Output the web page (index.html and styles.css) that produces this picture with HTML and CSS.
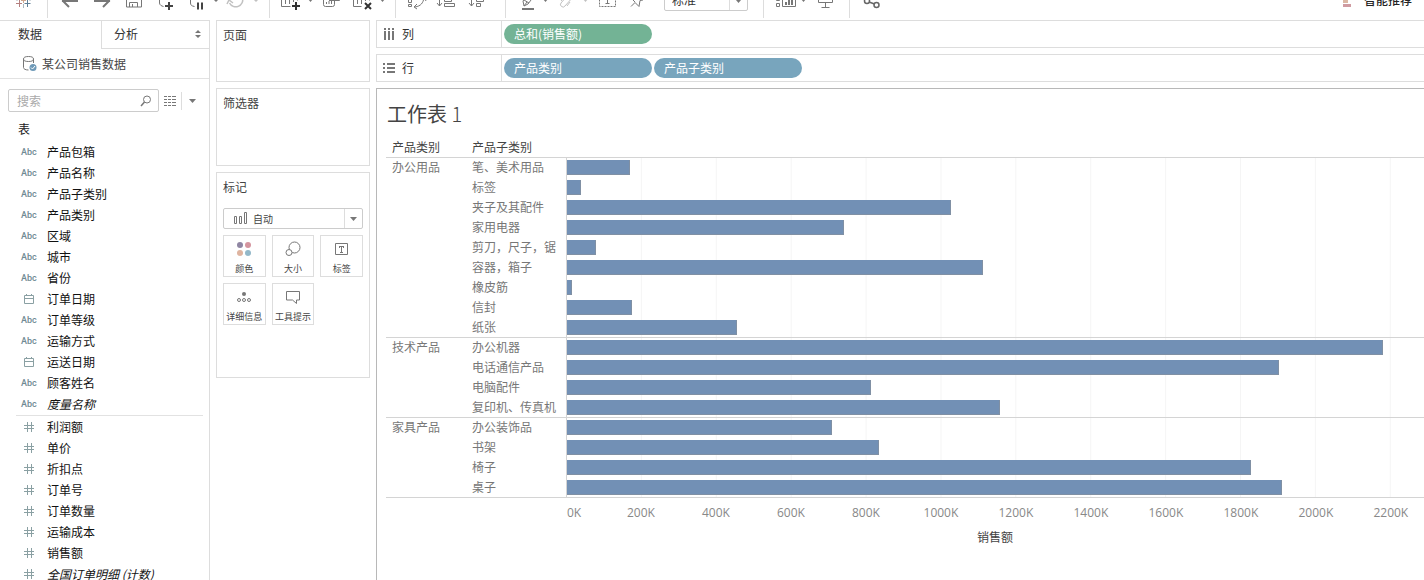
FILE: index.html
```html
<!DOCTYPE html>
<html lang="zh-CN">
<head>
<meta charset="utf-8">
<title>工作表 1</title>
<link rel="stylesheet" href="styles.css">
</head>
<body>
<header class="toolbar">
  <div class="group group-logo">
    <button class="tool tool-logo" aria-label="起始页"><svg width="28" height="24" viewBox="0 0 28 24"><path d="M14.500 8v5M12 10.500h5" stroke="#d0a890"/><path d="M10.500 10v7M7 13.500h6" stroke="#b57f7f"/><path d="M18.500 10v7M15.500 13.500h6" stroke="#5f7f96"/><path d="M14.500 14v4M8 9v2M21 9v2" stroke="#aab6bd"/></svg></button>
  </div>
  <div class="group group-file">
    <button class="tool plain" aria-label="撤消"><svg width="28" height="24" viewBox="0 0 28 24"><path d="M6 11h16M14 4l-7 7 6 6" stroke-width="2"/></svg></button>
    <button class="tool plain" aria-label="恢复"><svg width="28" height="24" viewBox="0 0 28 24"><path d="M6 11h16M14 4l7 7-6 6" stroke-width="2"/></svg></button>
    <button class="tool plain" aria-label="保存"><svg width="28" height="24" viewBox="0 0 28 24"><path d="M6.500 3.500h12l3 3v10.500h-15zM9.500 17v-4.500h8v4.500M12.500 17v-3"/></svg></button>
    <button class="tool plain" aria-label="新建数据源"><svg width="28" height="24" viewBox="0 0 28 24"><path d="M7.500 4v9c0 2 2 3 4 3.500M7.500 5c0-4 11-4 11 0v4"/><path d="M17 12v8M13 16h8" stroke="#444" stroke-width="2"/></svg></button>
    <button class="tool" aria-label="暂停自动更新"><svg width="28" height="24" viewBox="0 0 28 24"><path d="M8.500 4v9c0 2 1 3 4 3.500M8.500 5c0-4 11-4 11 0v4"/><path d="M16 12.500v7M20 12.500v7" stroke="#444" stroke-width="2"/></svg></button>
    <button class="caret" aria-label="更新选项"><svg width="12" height="24" viewBox="0 0 12 24"><path class="fill" d="M3 9h6l-3 3z"/></svg></button>
    <button class="tool faded" aria-label="运行更新"><svg width="28" height="24" viewBox="0 0 28 24"><path d="M20.500 8a7 7 0 0 1-13 5M5 14l2-4 4 3" stroke-width="1.500"/></svg></button>
    <button class="caret faded" aria-label="运行选项"><svg width="12" height="24" viewBox="0 0 12 24"><path class="fill" d="M3 9h6l-3 3z"/></svg></button>
  </div>
  <div class="group group-sheet">
    <button class="tool" aria-label="新建工作表"><svg width="28" height="24" viewBox="0 0 28 24"><path d="M4.500 4v12.500h9M4.500 3.500h16v7M8.500 14v-4M12.500 14v-7M16.500 12v-6" /><path d="M19 12v8M15 16h8" stroke="#333" stroke-width="2"/></svg></button>
    <button class="caret" aria-label="新建选项"><svg width="12" height="24" viewBox="0 0 12 24"><path class="fill" d="M3 9h5l-2.500 3z"/></svg></button>
    <button class="tool plain" aria-label="复制工作表"><svg width="28" height="24" viewBox="0 0 28 24"><path d="M6.500 5.500v9q0 2 2 2h7q2 0 2-2v-4M12 10.500h10.500v-8M9.500 14v-2M12 14v-3M14.500 14v-3"/></svg></button>
    <button class="tool" aria-label="清除工作表"><svg width="28" height="24" viewBox="0 0 28 24"><path d="M4.500 4v12.500h8M4.500 3.500h16v7M8.500 14v-4M12.500 14v-7M16.500 11v-5"/><path d="M16 13l6 6M22 13l-6 6" stroke="#333" stroke-width="2"/></svg></button>
    <button class="caret" aria-label="清除选项"><svg width="12" height="24" viewBox="0 0 12 24"><path class="fill" d="M3 9h5l-2.500 3z"/></svg></button>
  </div>
  <div class="group group-sort">
    <button class="tool" aria-label="交换行和列"><svg width="28" height="24" viewBox="0 0 28 24"><path d="M5.500 4.500h3v3h-3zM5.500 9.500h3v3h-3zM5.500 14.500h3v2h-3zM12 17c6-1 8-4 9-9M18 10l3-3 2 4M14 14l-3 3 3 2"/></svg></button>
    <button class="tool plain" aria-label="升序排序"><svg width="28" height="24" viewBox="0 0 28 24"><path d="M8.500 2v14M6 13l2.500 3 2.500-3M13.500 3.500h5v3h-5zM13.500 8.500h7v3h-7zM13.500 13.500h10v3h-10z"/></svg></button>
    <button class="tool plain" aria-label="降序排序"><svg width="28" height="24" viewBox="0 0 28 24"><path d="M8.500 2v14M6 13l2.500 3 2.500-3M13.500 3.500h10v3h-10zM13.500 8.500h7v3h-7zM13.500 13.500h4v3h-4z"/></svg></button>
  </div>
  <div class="group group-format">
    <button class="tool" aria-label="突出显示"><svg width="28" height="24" viewBox="0 0 28 24"><path d="M11 16l-1-5 6-8 5 3-6 8zM11 10l5 3M11 16l3-4"/><path d="M9 19h12" stroke-width="2"/></svg></button>
    <button class="caret" aria-label="突出显示选项"><svg width="12" height="24" viewBox="0 0 12 24"><path class="fill" d="M2 9h5l-2.500 3z"/></svg></button>
    <button class="tool faded" aria-label="组成员"><svg width="28" height="24" viewBox="0 0 28 24"><path d="M8 11l7-8a3 3 0 0 1 5 4l-8 9a2.500 2.500 0 0 1-4-3l7-8M17 12l-3 4"/></svg></button>
    <button class="caret faded" aria-label="组选项"><svg width="12" height="24" viewBox="0 0 12 24"><path class="fill" d="M2 9h5l-2.500 3z"/></svg></button>
    <button class="tool" aria-label="显示标记标签"><svg width="28" height="24" viewBox="0 0 28 24"><path d="M6.500 2.500h16v14h-16z" stroke-dasharray="2 1"/><path d="M11 6.500h7M14.500 6v7M12.500 13.500h4"/></svg></button>
    <button class="tool" aria-label="固定轴"><svg width="28" height="24" viewBox="0 0 28 24"><path d="M15 3l7 7-3 .500-1 6-4-4-4 4M14 12l-4-4 6-2"/></svg></button>
    <div class="fit"><select aria-label="适合"><option>标准</option></select><svg class="fit-arrow" width="18" height="20" viewBox="0 0 18 20"><path d="M.500 0v20" stroke="#ddd"/><path class="fill" d="M7 10h5l-2.500 3z"/></svg></div>
  </div>
  <div class="group group-view">
    <button class="tool" aria-label="显示/隐藏功能区"><svg width="28" height="24" viewBox="0 0 28 24"><path d="M5.500 7.500h3v3h-3zM5.500 13.500h3v3h-3zM11.500 5.500h13v11h-13z"/><path d="M15 15v-3M18 15v-5M21 15v-7" stroke-width="2"/></svg></button>
    <button class="caret" aria-label="功能区选项"><svg width="12" height="24" viewBox="0 0 12 24"><path class="fill" d="M2 9h5l-2.500 3z"/></svg></button>
    <button class="tool" aria-label="演示模式"><svg width="28" height="24" viewBox="0 0 28 24"><path d="M7.500 4.500h14v8h-14zM14.500 12.500v5M10.500 17.500h8"/></svg></button>
  </div>
  <div class="group group-share">
    <button class="tool" aria-label="共享"><svg class="share-icon" width="28" height="24" viewBox="0 0 28 24"><circle cx="10" cy="11" r="2.500"/><circle cx="19.500" cy="15" r="2.500"/><circle cx="19" cy="5" r="2.500"/><path d="M12 12l5.500 2M12 10l5-4"/></svg></button>
  </div>
  <button class="show-me"><svg width="12" height="18" viewBox="0 0 12 18"><path d="M0 2h10v3h-10z" fill="#9db6c4" stroke="none"/><path d="M0 8h5v4h-5z" fill="#dbb8a4" stroke="none"/><path d="M0 13h8v3h-8z" fill="#cf9ba1" stroke="none"/></svg>智能推荐</button>
</header>

<main class="workspace">
  <aside class="data-pane">
    <div class="tabs" role="tablist">
      <button class="tab" role="tab" aria-selected="true">数据</button>
      <button class="tab tab-other" role="tab" aria-selected="false">分析<svg width="6" height="8" viewBox="0 0 6 8"><path class="fill" d="M0 3l3-3 3 3zM0 5h6l-3 3z"/></svg></button>
    </div>
    <div class="source">
      <svg width="14" height="16" viewBox="0 0 14 16"><ellipse cx="5.500" cy="3" rx="5" ry="2.500"/><path d="M.500 3v8.500c0 1.500 2 2.500 5 2.500M10.500 3v4"/><circle cx="10" cy="11.500" r="3.500" fill="#6f9ab8" stroke="none"/><path d="M8 11.500l1.500 1.500 2.500-3" stroke="#fff"/></svg>
      某公司销售数据
    </div>
    <div class="search-row">
      <label class="search"><input type="text" placeholder="搜索" aria-label="搜索"><svg width="12" height="12" viewBox="0 0 12 12"><circle cx="7" cy="4.500" r="3.500"/><path d="M4.500 7l-3.500 4" stroke-width="1.500"/></svg></label>
      <button class="icon-button" aria-label="视图"><svg width="12" height="10" viewBox="0 0 12 10"><path d="M0 .500h12M0 3.500h12M0 6.500h12M0 9.500h12" stroke-dasharray="3 1 3 1 4 1"/></svg></button>
      <button class="icon-button more" aria-label="更多"><svg width="7" height="4" viewBox="0 0 7 4"><path class="fill" d="M0 0h7l-3.500 4z"/></svg></button>
    </div>
    <h2 class="tables-title">表</h2>
    <ul class="fields">
      <li><span class="abc">Abc</span>产品包箱</li>
      <li><span class="abc">Abc</span>产品名称</li>
      <li><span class="abc">Abc</span>产品子类别</li>
      <li><span class="abc">Abc</span>产品类别</li>
      <li><span class="abc">Abc</span>区域</li>
      <li><span class="abc">Abc</span>城市</li>
      <li><span class="abc">Abc</span>省份</li>
      <li><svg class="type" width="16" height="10" viewBox="0 0 16 10"><path d="M3.500 1.500h9v8h-9zM3.500 4.500h9M5.500 0v2M10.500 0v2"/></svg>订单日期</li>
      <li><span class="abc">Abc</span>订单等级</li>
      <li><span class="abc">Abc</span>运输方式</li>
      <li><svg class="type" width="16" height="10" viewBox="0 0 16 10"><path d="M3.500 1.500h9v8h-9zM3.500 4.500h9M5.500 0v2M10.500 0v2"/></svg>运送日期</li>
      <li><span class="abc">Abc</span>顾客姓名</li>
      <li class="generated"><span class="abc">Abc</span>度量名称</li>
    </ul>
    <ul class="fields measures">
      <li><svg class="type" width="16" height="10" viewBox="0 0 16 10"><path d="M6.500 0v10M10.500 0v10M3 3.500h10M3 6.500h10"/></svg>利润额</li>
      <li><svg class="type" width="16" height="10" viewBox="0 0 16 10"><path d="M6.500 0v10M10.500 0v10M3 3.500h10M3 6.500h10"/></svg>单价</li>
      <li><svg class="type" width="16" height="10" viewBox="0 0 16 10"><path d="M6.500 0v10M10.500 0v10M3 3.500h10M3 6.500h10"/></svg>折扣点</li>
      <li><svg class="type" width="16" height="10" viewBox="0 0 16 10"><path d="M6.500 0v10M10.500 0v10M3 3.500h10M3 6.500h10"/></svg>订单号</li>
      <li><svg class="type" width="16" height="10" viewBox="0 0 16 10"><path d="M6.500 0v10M10.500 0v10M3 3.500h10M3 6.500h10"/></svg>订单数量</li>
      <li><svg class="type" width="16" height="10" viewBox="0 0 16 10"><path d="M6.500 0v10M10.500 0v10M3 3.500h10M3 6.500h10"/></svg>运输成本</li>
      <li><svg class="type" width="16" height="10" viewBox="0 0 16 10"><path d="M6.500 0v10M10.500 0v10M3 3.500h10M3 6.500h10"/></svg>销售额</li>
      <li class="generated"><svg class="type" width="16" height="10" viewBox="0 0 16 10"><path d="M6.500 0v10M10.500 0v10M3 3.500h10M3 6.500h10"/></svg>全国订单明细 (计数)</li>
    </ul>
  </aside>

  <div class="cards">
    <section class="card card-pages"><h2>页面</h2></section>
    <section class="card card-filters"><h2>筛选器</h2></section>
    <section class="card card-marks">
      <h2>标记</h2>
      <div class="mark-type">
        <svg class="mark-icon" width="14" height="12" viewBox="0 0 14 12"><path d="M.500 4.500h2v7h-2zM5.500 4.500h2v7h-2zM10.500.500h2v11h-2z"/></svg>
        <select aria-label="标记类型"><option>自动</option></select>
        <svg class="mark-arrow" width="18" height="19" viewBox="0 0 18 19"><path d="M.500 0v19" stroke="#ddd"/><path class="fill" d="M6 8h7l-3.500 4z"/></svg>
      </div>
      <div class="mark-buttons">
        <button><svg width="20" height="16" viewBox="0 0 20 16"><g stroke="none"><circle cx="6" cy="4" r="3" fill="#8f86a3"/><circle cx="14" cy="4" r="3" fill="#d5959f"/><circle cx="6" cy="12" r="3" fill="#dfb4a0"/><circle cx="14" cy="12" r="3" fill="#93b8c9"/></g></svg>颜色</button>
        <button><svg width="20" height="16" viewBox="0 0 20 16"><circle cx="11.500" cy="6.500" r="5.500"/><circle cx="6" cy="11.500" r="3" fill="#fff"/></svg>大小</button>
        <button><svg width="20" height="16" viewBox="0 0 20 16"><path d="M3.500 2.500h12v11h-12zM7 5.500h5M9.500 5v6M8 11.500h3M7.500 5v2M11.500 5v2"/></svg>标签</button>
        <button><svg width="20" height="16" viewBox="0 0 20 16"><circle cx="10" cy="5" r="2" class="fill"/><circle cx="5" cy="11" r="1.500"/><circle cx="10" cy="11" r="1.500"/><circle cx="15" cy="11" r="1.500"/></svg>详细信息</button>
        <button><svg width="20" height="16" viewBox="0 0 20 16"><path d="M3.500 2.500h13v8.500h-3v3.500l-4-3.500h-6z"/></svg>工具提示</button>
      </div>
    </section>
  </div>

  <div class="view">
    <section class="shelf">
      <h2><svg width="12" height="12" viewBox="0 0 12 12"><path d="M2 0v2M2 3v9M6 0v2M6 3v9M10 0v2M10 3v9" stroke-width="2"/></svg>列</h2>
      <button class="pill pill-measure">总和(销售额)</button>
    </section>
    <section class="shelf">
      <h2><svg width="12" height="12" viewBox="0 0 12 12"><path d="M0 2h2M4 2h8M0 6h2M4 6h8M0 10h2M4 10h8" stroke-width="2"/></svg>行</h2>
      <button class="pill">产品类别</button>
      <button class="pill">产品子类别</button>
    </section>
    <section class="sheet">
      <h1>工作表 <span class="sheet-number">1</span></h1>
      <table class="chart">
        <colgroup><col class="col-category"><col class="col-sub"><col></colgroup>
        <thead><tr><th>产品类别</th><th>产品子类别</th><th aria-label="销售额"></th></tr></thead>
        <tbody>
          <tr><th rowspan="9">办公用品</th><th>笔、美术用品</th><td><div class="bar" style="width:7.35%"></div></td></tr>
          <tr><th>标签</th><td><div class="bar" style="width:1.63%"></div></td></tr>
          <tr><th>夹子及其配件</th><td><div class="bar" style="width:44.81%"></div></td></tr>
          <tr><th>家用电器</th><td><div class="bar" style="width:32.32%"></div></td></tr>
          <tr><th>剪刀，尺子，锯</th><td><div class="bar" style="width:3.38%"></div></td></tr>
          <tr><th>容器，箱子</th><td><div class="bar" style="width:48.54%"></div></td></tr>
          <tr><th>橡皮筋</th><td><div class="bar" style="width:0.58%"></div></td></tr>
          <tr><th>信封</th><td><div class="bar" style="width:7.58%"></div></td></tr>
          <tr><th>纸张</th><td><div class="bar" style="width:19.84%"></div></td></tr>
        </tbody>
        <tbody>
          <tr><th rowspan="4">技术产品</th><th>办公机器</th><td><div class="bar" style="width:95.22%"></div></td></tr>
          <tr><th>电话通信产品</th><td><div class="bar" style="width:83.08%"></div></td></tr>
          <tr><th>电脑配件</th><td><div class="bar" style="width:35.47%"></div></td></tr>
          <tr><th>复印机、传真机</th><td><div class="bar" style="width:50.53%"></div></td></tr>
        </tbody>
        <tbody>
          <tr><th rowspan="4">家具产品</th><th>办公装饰品</th><td><div class="bar" style="width:30.92%"></div></td></tr>
          <tr><th>书架</th><td><div class="bar" style="width:36.41%"></div></td></tr>
          <tr><th>椅子</th><td><div class="bar" style="width:79.81%"></div></td></tr>
          <tr><th>桌子</th><td><div class="bar" style="width:83.43%"></div></td></tr>
        </tbody>
      </table>
      <div class="axis">
        <div class="ticks"><span>0K</span><span>200K</span><span>400K</span><span>600K</span><span>800K</span><span>1000K</span><span>1200K</span><span>1400K</span><span>1600K</span><span>1800K</span><span>2000K</span><span>2200K</span></div>
        <div class="axis-title">销售额</div>
      </div>
    </section>
  </div>
</main>
</body>
</html>
```
FILE: styles.css
```css
* { box-sizing: border-box; }

body {
  margin: 0;
  height: 100vh;
  display: flex;
  flex-direction: column;
  overflow: hidden;
  background: #fff;
  color: #333;
  font: 12px/18px "Noto Sans CJK SC", sans-serif;
}

h1, h2, ul { margin: 0; padding: 0; font-weight: 400; }
h2 { font-size: 12px; }
ul { list-style: none; }

button, select, input {
  margin: 0;
  padding: 0;
  border: 0;
  background: none;
  color: inherit;
  font: inherit;
}

select { appearance: none; }
svg { display: block; flex: none; fill: none; stroke: #777; }
.fill { fill: #777; stroke: none; }

/* Toolbar */
.toolbar {
  flex: none;
  display: flex;
  height: 20px;
  padding-bottom: 2px;
  overflow: hidden;
}

.group {
  flex: none;
  display: flex;
  align-items: flex-end;
  padding: 0 0 4px 7px;
  border-right: 1px solid #ddd;
}

.group-logo { width: 48px; padding-left: 9px; }
.group-file { width: 222px; padding-left: 6px; }
.group-sheet { width: 126px; }
.group-sort { width: 110px; }
.group-format { width: 258px; }
.group-view { width: 86px; }
.group-share { border: 0; }

.tool { flex: none; width: 28px; }
.tool.plain { width: 32px; }
.group-file .plain svg { margin: 0 auto; }
.caret { flex: none; width: 12px; }
.faded { opacity: 0.45; }
.share-icon { stroke: #666; stroke-width: 1.5; }

.fit {
  position: relative;
  width: 84px;
  height: 22px;
  margin: 0 0 3px 15px;
  border: 1px solid #ccc;
  border-radius: 2px;
}
.fit select { display: block; width: 100%; height: 20px; padding-left: 7px; }
.fit-arrow { position: absolute; top: 0; right: 0; pointer-events: none; }

.show-me {
  display: flex;
  align-items: flex-end;
  align-self: flex-end;
  gap: 9px;
  height: 18px;
  margin: 0 12px 9px auto;
  color: #222;
  font-weight: 500;
}

/* Workspace */
.workspace {
  flex: 1;
  min-height: 0;
  display: grid;
  grid-template-columns: 210px 154px minmax(0, 1fr);
  column-gap: 6px;
}

/* Data pane */
.data-pane { border: 1px solid #ddd; border-width: 1px 1px 0 0; overflow: hidden; }

.tabs { display: flex; height: 28px; }
.tab { width: 101px; padding: 0 0 2px 18px; text-align: left; color: #333; }
.tab-other {
  flex: 1;
  display: flex;
  align-items: center;
  justify-content: space-between;
  padding: 0 8px 2px 12px;
  border: 1px solid #ddd;
  border-width: 0 0 1px 1px;
}

.source {
  display: flex;
  align-items: center;
  gap: 5px;
  height: 30px;
  padding-left: 23px;
  border-bottom: 1px solid #e2e2e2;
  color: #444;
}

.search-row { display: flex; align-items: center; padding: 10px 0 0 8px; }
.search {
  display: flex;
  align-items: center;
  width: 151px;
  height: 23px;
  padding: 0 6px 0 8px;
  border: 1px solid #ccc;
  border-radius: 2px;
}
.search input { flex: 1; min-width: 0; height: 20px; outline: 0; }
.search input::placeholder { color: #aaa; }
.icon-button { height: 18px; margin-left: 5px; }
.more { padding-left: 7px; border-left: 1px solid #ddd; }

.tables-title { padding: 8px 0 3px 18px; color: #222; }

.fields { padding-bottom: 1px; }
.fields li {
  display: flex;
  align-items: center;
  gap: 10px;
  height: 21px;
  padding-left: 21px;
  color: #111;
  white-space: nowrap;
}
.abc { width: 16px; color: #6f8a93; font: 500 9px/18px Roboto, sans-serif; }
.type { stroke: #8aa0a3; }
.generated { font-style: italic; }
.generated .abc { font-style: normal; }
.measures { position: relative; padding-top: 1px; }
.measures::before {
  content: "";
  position: absolute;
  top: 0;
  left: 16px;
  right: 6px;
  height: 1px;
  background: #e2e2e2;
}

/* Cards */
.cards { display: flex; flex-direction: column; gap: 6px; }
.card { padding: 5px 6px; border: 1px solid #ddd; color: #444; }
.card-pages { height: 62px; }
.card-filters { height: 78px; }
.card-marks { height: 206px; }

.mark-type {
  position: relative;
  height: 21px;
  margin: 12px 0 6px;
  border: 1px solid #ccc;
  border-radius: 2px;
}
.mark-type select { display: block; width: 100%; height: 19px; padding-left: 29px; font-size: 10px; }
.mark-icon { position: absolute; top: 3px; left: 10px; }
.mark-arrow { position: absolute; top: 0; right: 0; pointer-events: none; }

.mark-buttons { display: grid; grid-template-columns: repeat(3, 1fr); gap: 6px; }
.mark-buttons button {
  display: flex;
  flex-direction: column;
  align-items: center;
  gap: 5px;
  height: 42px;
  padding-top: 5px;
  border: 1px solid #ddd;
  font-size: 9px;
  line-height: 14px;
  white-space: nowrap;
}

/* Shelves */
.view { display: flex; flex-direction: column; gap: 6px; min-width: 0; }
.shelf {
  flex: none;
  display: flex;
  align-items: center;
  gap: 2px;
  height: 28px;
  border: 1px solid #ddd;
  border-right: 0;
}
.shelf h2 {
  display: flex;
  align-items: center;
  gap: 7px;
  width: 125px;
  height: 26px;
  padding-left: 6px;
  border-right: 1px solid #ddd;
}
.pill {
  width: 148px;
  height: 20px;
  padding-left: 10px;
  border-radius: 10px;
  background: #78a5bd;
  color: #fff;
  line-height: 20px;
  text-align: left;
}
.pill-measure { background: #73b395; }

/* Sheet */
.sheet {
  flex: 1;
  padding: 10px 0 0 9px;
  border: 1px solid #b8b8b8;
  border-width: 1px 0 0 1px;
}
.sheet h1 { padding: 0 0 9px 1px; color: #444; font-size: 20px; line-height: 30px; }
.sheet-number { font-weight: 300; }

.chart { width: 100%; table-layout: fixed; border-spacing: 0; }
.col-category { width: 80px; }
.col-sub { width: 101px; }
.chart th, .chart td { height: 20px; padding: 0; vertical-align: top; }
.chart th { padding-left: 6px; color: #777; font-weight: 400; text-align: left; white-space: nowrap; }
.chart thead th { border-bottom: 1px solid #d4d4d4; color: #444; }
.chart tbody td {
  padding-top: 2px;
  background: linear-gradient(to left, #f5f5f5 1px, transparent 1px) 0 0 / 8.74% 100%;
}
.chart tbody th:nth-last-child(2) { border-right: 1px solid #d4d4d4; }
.chart tbody tr:last-child > *, .chart tbody th[rowspan] { border-bottom: 1px solid #d4d4d4; }
.bar { height: 15px; background: #7290b5; border: 1px solid #8090a4; border-width: 0 1px 1px 0; }

.axis { padding-left: 180px; }
.ticks { display: flex; padding-top: 6px; color: #888; font-family: "Open Sans", sans-serif; }
.ticks span { flex: none; width: 8.74%; text-align: center; }
.ticks span:first-child { width: 4.37%; padding-left: 1px; text-align: left; }
.axis-title { padding-top: 6px; color: #444; text-align: center; }
```
